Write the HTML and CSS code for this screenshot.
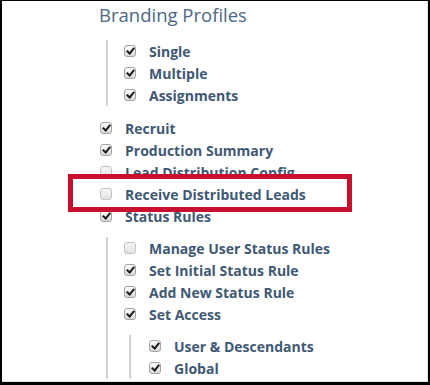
FILE: index.html
```html
<!DOCTYPE html>
<html>
<head>
<meta charset="utf-8">
<link rel="stylesheet" href="styles.css">
</head>
<body>
<div class="frame">
  <div class="content">
    <h2 class="title">Branding Profiles</h2>
    <ul class="tree sub">
      <li><div class="row"><span class="cb on"></span><span class="lbl">Single</span></div></li>
      <li><div class="row"><span class="cb on"></span><span class="lbl">Multiple</span></div></li>
      <li><div class="row"><span class="cb on"></span><span class="lbl">Assignments</span></div></li>
    </ul>
    <ul class="tree top">
      <li><div class="row"><span class="cb on"></span><span class="lbl">Recruit</span></div></li>
      <li><div class="row"><span class="cb on"></span><span class="lbl">Production Summary</span></div></li>
      <li><div class="row"><span class="cb"></span><span class="lbl">Lead Distribution Config</span></div></li>
      <li><div class="row raised"><span class="cb"></span><span class="lbl">Receive Distributed Leads</span></div></li>
      <li><div class="row"><span class="cb on"></span><span class="lbl">Status Rules</span></div>
        <ul class="tree sub">
          <li><div class="row"><span class="cb"></span><span class="lbl">Manage User Status Rules</span></div></li>
          <li><div class="row"><span class="cb on"></span><span class="lbl">Set Initial Status Rule</span></div></li>
          <li><div class="row"><span class="cb on"></span><span class="lbl">Add New Status Rule</span></div></li>
          <li><div class="row"><span class="cb on"></span><span class="lbl">Set Access</span></div>
            <ul class="tree sub">
              <li><div class="row"><span class="cb on"></span><span class="lbl">User &amp; Descendants</span></div></li>
              <li><div class="row"><span class="cb on"></span><span class="lbl">Global</span></div></li>
            </ul>
          </li>
        </ul>
      </li>
    </ul>
  </div>
  <div class="callout"></div>
</div>
</body>
</html>
```

FILE: styles.css
```css
html, body {
  margin: 0;
  padding: 0;
  background: #fff;
}

.frame {
  position: relative;
  width: 430px;
  height: 385px;
  box-sizing: border-box;
  border-style: solid;
  border-color: #000;
  border-width: 1px 2px 3px 2px;
  overflow: hidden;
  background: #fff;
  font-family: "Open Sans", "Noto Sans", sans-serif;
}

.frame::after {
  content: "";
  position: absolute;
  right: 0;
  bottom: 0;
  top: 0;
  left: 0;
  border-right: 1px solid #e4e4e4;
  border-bottom: 1px solid #e4e4e4;
  pointer-events: none;
}

.content {
  padding-left: 97px;
}

.title {
  margin: 2px 0 0 0;
  font-size: 18.5px;
  line-height: 24px;
  font-weight: 400;
  color: #4d6785;
}

.tree {
  list-style: none;
  margin: 0;
  padding: 0;
}

.top {
  margin-top: 11px;
}

.sub {
  margin: 13px 0 11px 7px;
  padding-left: 15px;
  border-left: 2px solid #d3d3d3;
}

.top .sub {
  margin-top: 10px;
  margin-bottom: 0;
}

.sub .sub {
  margin: 10px 0 0 6px;
  padding-left: 17px;
}

.row {
  display: flex;
  align-items: center;
  height: 22px;
}

.raised {
  position: relative;
  z-index: 2;
}

.cb {
  flex: none;
  position: relative;
  width: 12px;
  height: 12px;
  box-sizing: border-box;
  margin-left: 1px;
  border: 1px solid #c2c2c2;
  border-radius: 3px;
  background: linear-gradient(#f7f7f7, #e2e2e2);
}

.cb.on {
  border-color: #a3a3a3;
  background: linear-gradient(#fbfbfb, #dadada);
}

.cb.on::after {
  content: "";
  position: absolute;
  left: 3px;
  top: 0px;
  width: 3px;
  height: 6px;
  border: solid #1c1c1c;
  border-width: 0 2px 2px 0;
  transform: rotate(40deg);
}

.lbl {
  margin-left: 13px;
  font-size: 14px;
  font-weight: 700;
  color: #3f5874;
  white-space: nowrap;
}

.callout {
  position: absolute;
  left: 66px;
  top: 173px;
  width: 284px;
  height: 38px;
  box-sizing: border-box;
  border: 5px solid #c8102e;
  background: #fff;
  z-index: 1;
}
```
